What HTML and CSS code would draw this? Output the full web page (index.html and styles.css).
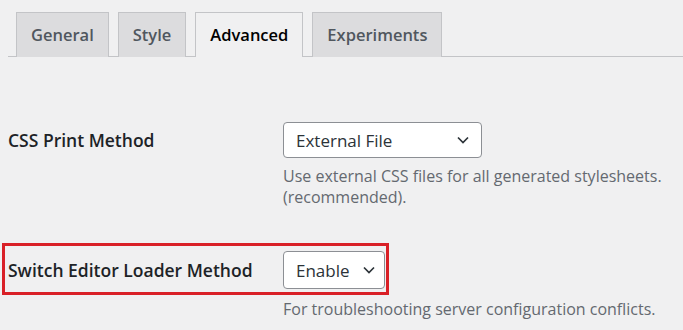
FILE: index.html
```html
<!DOCTYPE html>
<html>
<head>
<meta charset="utf-8">
<link rel="stylesheet" href="styles.css">
</head>
<body>
<nav class="tabs">
  <a class="tab">General</a>
  <a class="tab">Style</a>
  <a class="tab active">Advanced</a>
  <a class="tab">Experiments</a>
</nav>
<div class="settings">
  <div class="row row-first">
    <div class="label">CSS Print Method</div>
    <div class="field">
      <div class="select select-wide"><span>External File</span>
        <svg class="chev" width="12" height="8" viewBox="0 0 12 8"><path d="M1 1.5 L6 6.5 L11 1.5" fill="none" stroke="#2c3338" stroke-width="1.7"/></svg>
      </div>
      <p class="desc">Use external CSS files for all generated stylesheets.<br>(recommended).</p>
    </div>
  </div>
  <div class="row row-highlight">
    <div class="label">Switch Editor Loader Method</div>
    <div class="field">
      <div class="select select-narrow"><span>Enable</span>
        <svg class="chev" width="12" height="8" viewBox="0 0 12 8"><path d="M1 1.5 L6 6.5 L11 1.5" fill="none" stroke="#2c3338" stroke-width="1.7"/></svg>
      </div>
    </div>
  </div>
  <div class="row row-desc">
    <div class="label"></div>
    <div class="field">
      <p class="desc">For troubleshooting server configuration conflicts.</p>
    </div>
  </div>
</div>
</body>
</html>
```
FILE: styles.css
```css
html, body {
  margin: 0;
  padding: 0;
  background: #f0f0f1;
  font-family: "Open Sans", "Noto Sans", sans-serif;
  color: #1d2327;
}
.tabs {
  display: flex;
  margin: 12px 0 0 8px;
  padding-left: 8px;
  border-bottom: 1px solid #c3c4c7;
  height: 44px;
}
.tab {
  display: flex;
  align-items: center;
  box-sizing: border-box;
  height: 45px;
  padding: 0 14px;
  margin-right: 9px;
  border: 1px solid #c3c4c7;
  border-bottom: none;
  background: #dcdcde;
  color: #50575e;
  font-size: 16.5px;
  font-weight: 600;
  line-height: 1;
}
.tab.active {
  background: #f0f0f1;
  color: #000;
  position: relative;
  z-index: 1;
}
.settings {
  display: flex;
  flex-direction: column;
}
.row {
  display: flex;
  align-items: flex-start;
}
.row-first {
  margin: 65px 0 0 8px;
}
.label {
  width: 275px;
  flex: none;
  font-size: 17.5px;
  font-weight: 600;
  color: #1d2327;
  height: 36px;
  display: flex;
  align-items: center;
}
.field {
  display: flex;
  flex-direction: column;
}
.select {
  box-sizing: border-box;
  display: flex;
  align-items: center;
  justify-content: space-between;
  height: 36px;
  background: #fff;
  border: 1px solid #8c8f94;
  border-radius: 4px;
  padding: 0 12px 0 12px;
  font-size: 17px;
  color: #2c3338;
}
.select-wide { width: 199px; }
.select-narrow { width: 102px; height: 38px; padding: 0 9px 0 12px; }
.desc {
  margin: 8px 0 0 0;
  font-size: 16px;
  line-height: 21px;
  color: #646970;
}
.row-highlight {
  align-self: flex-start;
  margin: 35px 0 0 2px;
  border: 3px solid #d92027;
  padding: 5px 1px 3px 3px;
}
.row-highlight .label { height: 38px; }
.row-desc {
  margin-left: 8px;
}
.row-desc .label { height: auto; }
.row-desc .desc { margin-top: 4px; }
```
